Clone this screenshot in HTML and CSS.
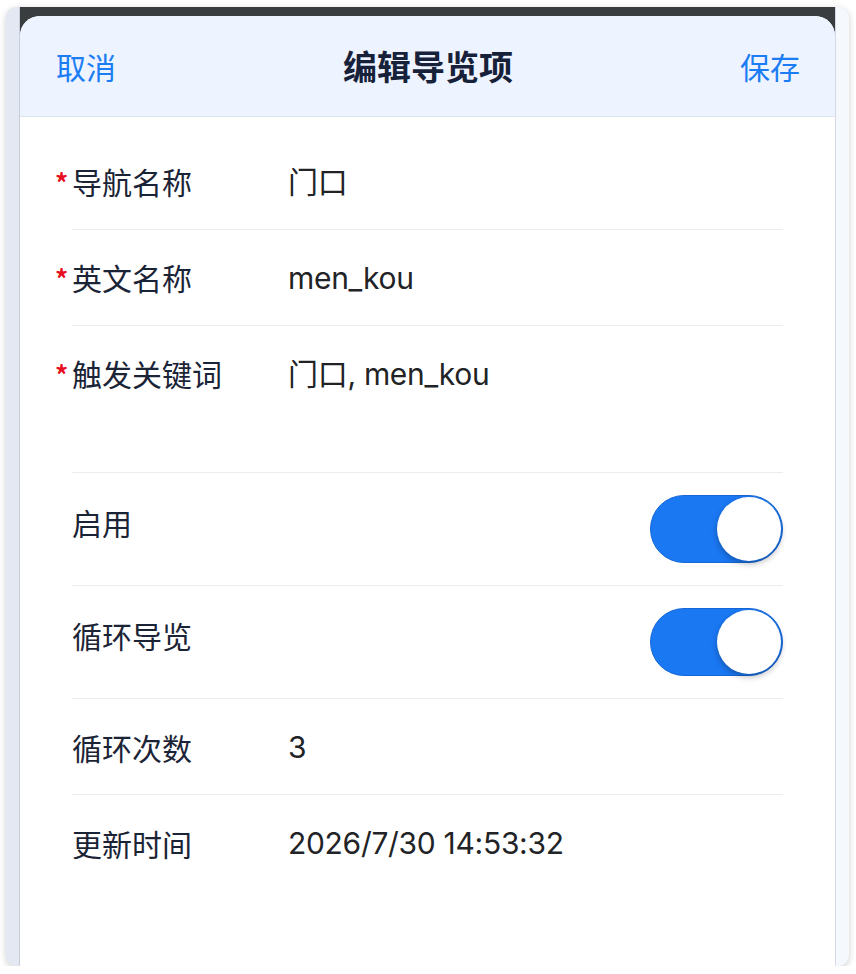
FILE: index.html
```html
<!DOCTYPE html>
<html lang="zh-CN">
<head>
<meta charset="utf-8">
<title>编辑导览项</title>
<link rel="stylesheet" href="styles.css">
</head>
<body>
<div class="device">
  <div class="strip strip-left"></div>
  <div class="screen">
    <div class="sheet">
      <header class="sheet-header">
        <span class="hdr-btn">取消</span>
        <h1 class="hdr-title">编辑导览项</h1>
        <span class="hdr-btn">保存</span>
      </header>
      <div class="sheet-body">
        <section class="group group-first">
          <div class="row">
            <div class="label"><span class="req">*</span>导航名称</div>
            <div class="value">门口</div>
          </div>
          <div class="row">
            <div class="label"><span class="req">*</span>英文名称</div>
            <div class="value">men_kou</div>
          </div>
          <div class="row">
            <div class="label"><span class="req">*</span>触发关键词</div>
            <div class="value">门口, men_kou</div>
          </div>
        </section>
        <section class="group group-second">
          <div class="row row-switch">
            <div class="label">启用</div>
            <div class="switch on"><span class="knob"></span></div>
          </div>
          <div class="row row-switch">
            <div class="label">循环导览</div>
            <div class="switch on"><span class="knob"></span></div>
          </div>
          <div class="row">
            <div class="label">循环次数</div>
            <div class="value">3</div>
          </div>
          <div class="row">
            <div class="label">更新时间</div>
            <div class="value">2026/7/30 14:53:32</div>
          </div>
        </section>
      </div>
    </div>
  </div>
  <div class="strip strip-right"></div>
</div>
</body>
</html>
```
FILE: styles.css
```css
* { box-sizing: border-box; }
html, body { margin: 0; padding: 0; background: #ffffff; }
body {
  font-family: Inter, "Noto Sans CJK SC", sans-serif;
  padding: 7px 7px 0 6px;
}
.device {
  display: flex;
  height: 959px;
  border-radius: 11px;
  overflow: hidden;
  box-shadow: 0 2px 7px rgba(0, 0, 0, 0.2);
  background: #e3e8f2;
}
.strip { flex: 0 0 13px; }
.strip-left { background: #e3e8f2; }
.strip-right { background: #f5f8fd; }
.screen {
  flex: 1;
  display: flex;
  flex-direction: column;
  background: #3a3d40;
  border-left: 1px solid #c6cedb;
  border-right: 1px solid #d3dae5;
  padding-top: 9px;
}
.sheet {
  flex: 1;
  background: #ffffff;
  border-radius: 20px 20px 0 0;
  overflow: hidden;
  display: flex;
  flex-direction: column;
}
.sheet-header {
  height: 101px;
  flex: 0 0 101px;
  background: #edf4ff;
  border-bottom: 1px solid #dce5f0;
  display: flex;
  align-items: center;
  justify-content: space-between;
  padding: 0 35px 0 36px;
}
.hdr-btn {
  font-family: "Noto Sans CJK SC", sans-serif;
  font-size: 30px;
  color: #1b7cf4;
  line-height: 1;
}
.hdr-title {
  margin: 0;
  font-family: "Noto Sans CJK SC", sans-serif;
  font-size: 34px;
  font-weight: 700;
  color: #17223a;
  line-height: 1;
}
.sheet-body { padding: 17px 52px 0 52px; }
.row {
  display: flex;
  align-items: center;
  height: 96px;
  border-bottom: 1px solid #ececee;
}
.group-first .row:last-child { border-bottom: none; height: 95px; }
.group-second {
  margin-top: 51px;
  border-top: 1px solid #ececee;
}
.group-second .row:last-child { border-bottom: none; }
.row-switch {
  height: 113px;
  align-items: flex-start;
  justify-content: space-between;
  padding-top: 22px;
}
.row-switch .label { margin-top: 6px; }
.label {
  flex: 0 0 216px;
  font-family: "Noto Sans CJK SC", sans-serif;
  font-size: 30px;
  line-height: 42px;
  color: #1b2436;
  white-space: nowrap;
}
.req {
  display: inline-block;
  width: 17px;
  margin-left: -17px;
  color: #e8101f;
  font-size: 26px;
  font-weight: 700;
  vertical-align: top;
  line-height: 44px;
}
.value {
  font-size: 30px;
  line-height: 42px;
  color: #222326;
  white-space: nowrap;
  letter-spacing: -0.3px;
}
.switch {
  width: 133px;
  height: 68px;
  border-radius: 34px;
  background: #1a78f3;
  border: 1px solid #1767d6;
  display: flex;
  align-items: center;
  justify-content: flex-end;
  padding: 0 1px;
}
.knob {
  width: 64px;
  height: 64px;
  border-radius: 50%;
  background: #ffffff;
  box-shadow: 0 3px 6px rgba(0, 0, 0, 0.28);
}
```
